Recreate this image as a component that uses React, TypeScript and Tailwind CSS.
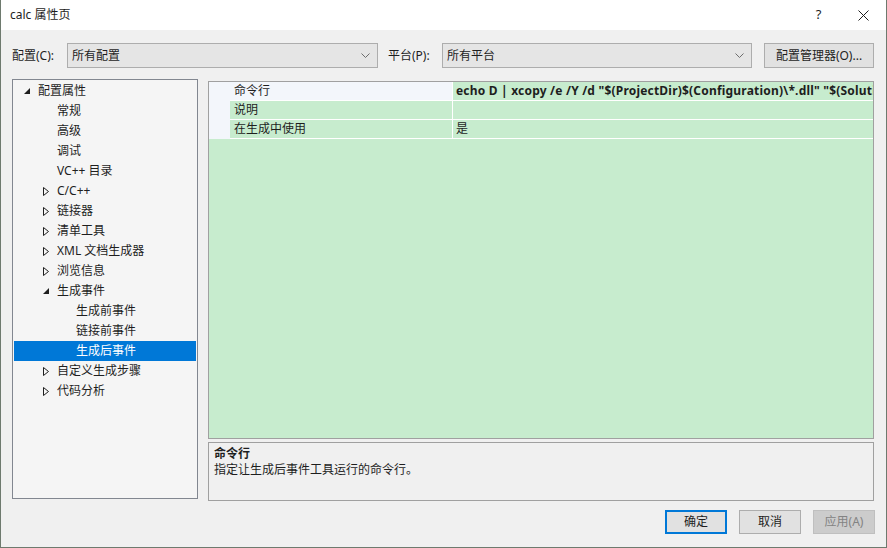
import React from "react";

type Node = { label: string; level: number; toggle?: "open" | "closed"; selected?: boolean };

const tree: Node[] = [
  { label: "配置属性", level: 0, toggle: "open" },
  { label: "常规", level: 1 },
  { label: "高级", level: 1 },
  { label: "调试", level: 1 },
  { label: "VC++ 目录", level: 1 },
  { label: "C/C++", level: 1, toggle: "closed" },
  { label: "链接器", level: 1, toggle: "closed" },
  { label: "清单工具", level: 1, toggle: "closed" },
  { label: "XML 文档生成器", level: 1, toggle: "closed" },
  { label: "浏览信息", level: 1, toggle: "closed" },
  { label: "生成事件", level: 1, toggle: "open" },
  { label: "生成前事件", level: 2 },
  { label: "链接前事件", level: 2 },
  { label: "生成后事件", level: 2, selected: true },
  { label: "自定义生成步骤", level: 1, toggle: "closed" },
  { label: "代码分析", level: 1, toggle: "closed" },
];

const padByLevel = ["pl-[10px]", "pl-[29px]", "pl-[48px]"];

function Toggle({ kind }: { kind?: "open" | "closed" }) {
  if (kind === "open")
    return (
      <svg width="6" height="6" viewBox="0 0 6 6" className="mr-[8px] shrink-0">
        <polygon points="6,0 6,6 0,6" fill="#1e1e1e" />
      </svg>
    );
  if (kind === "closed")
    return (
      <svg width="6" height="9" viewBox="0 0 6 9" className="mr-[8px] shrink-0">
        <polygon points="0.5,0.5 5.5,4.5 0.5,8.5" fill="none" stroke="#1e1e1e" strokeWidth="1" />
      </svg>
    );
  return <span className="w-[14px] shrink-0" />;
}

function Chevron() {
  return (
    <svg width="9" height="5" viewBox="0 0 9 5" className="shrink-0">
      <polyline points="0.5,0.5 4.5,4.5 8.5,0.5" fill="none" stroke="#6d6d6d" strokeWidth="1" />
    </svg>
  );
}

function Combo({ value, width }: { value: string; width: string }) {
  return (
    <div className={`${width} shrink-0 h-[25px] flex items-center justify-between pl-[4px] pr-[7px] bg-[#e5e5e5] border border-[#adadad]`}>
      <span>{value}</span>
      <Chevron />
    </div>
  );
}

export default function App() {
  return (
    <div className="w-[887px] h-[548px] flex flex-col border-x border-b border-[#6e7a6e] text-[12px] text-[#1e1e1e] font-['Noto_Sans','Noto_Sans_CJK_SC',sans-serif] overflow-hidden">
      {/* 标题栏 */}
      <div className="h-[30px] shrink-0 bg-white flex items-center pl-[9px]">
        <span className="flex-1">calc 属性页</span>
        <span className="w-[46px] text-center text-[13px] pl-[3px]">?</span>
        <span className="w-[46px] flex justify-center">
          <svg width="11" height="11" viewBox="0 0 11 11">
            <path d="M0.5 0.5 L10.5 10.5 M10.5 0.5 L0.5 10.5" stroke="#1e1e1e" strokeWidth="1" />
          </svg>
        </span>
      </div>

      <div className="flex-1 bg-[#f0f0f0] flex flex-col pl-[11px] pr-[11px]">
        {/* 配置 / 平台 */}
        <div className="flex items-center mt-[13px] h-[25px]">
          <span className="w-[55px] shrink-0">配置(C):</span>
          <Combo value="所有配置" width="w-[311px]" />
          <span className="w-[54px] shrink-0 ml-[10px]">平台(P):</span>
          <Combo value="所有平台" width="w-[310px]" />
          <div className="ml-[12px] w-[110px] shrink-0 h-[25px] flex items-center justify-center bg-[#e1e1e1] border border-[#adadad]">
            配置管理器(O)...
          </div>
        </div>

        <div className="flex mt-[11px] h-[422px]">
          {/* 树 */}
          <div className="w-[186px] shrink-0 h-[420px] bg-[#f5f5f5] border border-[#828790] pt-px">
            {tree.map((n) => (
              <div
                key={n.label}
                className={`h-[20px] mx-px flex items-center whitespace-nowrap ${padByLevel[n.level]} ${
                  n.selected ? "bg-[#0078d7] text-white" : ""
                }`}
              >
                <Toggle kind={n.toggle} />
                <span className="leading-none">{n.label}</span>
              </div>
            ))}
          </div>

          {/* 右侧 */}
          <div className="w-[666px] shrink-0 ml-[10px] pt-[2px] flex flex-col">
            <div className="h-[358px] border border-[#a0a0a0] bg-[#c7ecce] flex flex-col">
              <div className="flex">
                <div className="w-[21px] shrink-0 bg-[#f3f6fb] h-[57px]" />
                <div className="flex-1 flex flex-col min-w-0">
                  <div className="flex h-[19px] border-b border-white">
                    <div className="w-[223px] shrink-0 bg-[#f3f6fb] pl-[4px] flex items-center border-r border-white">命令行</div>
                    <div className="flex-1 min-w-0 overflow-hidden whitespace-nowrap pl-[3px] flex items-center font-bold tracking-[0.2px]">
                      echo D | xcopy /e /Y /d "$(ProjectDir)$(Configuration)\*.dll" "$(SolutionDir)$(Configuration)\" /y
                    </div>
                  </div>
                  <div className="flex h-[19px] border-b border-white">
                    <div className="w-[223px] shrink-0 pl-[4px] flex items-center border-r border-white">说明</div>
                    <div className="flex-1" />
                  </div>
                  <div className="flex h-[19px] border-b border-white">
                    <div className="w-[223px] shrink-0 pl-[4px] flex items-center border-r border-white">在生成中使用</div>
                    <div className="flex-1 pl-[3px] flex items-center">是</div>
                  </div>
                </div>
              </div>
            </div>

            <div className="mt-[3px] h-[59px] border border-[#a0a0a0] pl-[5px] pt-[3px] flex flex-col">
              <span className="font-bold leading-[16px]">命令行</span>
              <span className="leading-[16px]">指定让生成后事件工具运行的命令行。</span>
            </div>
          </div>
        </div>

        {/* 按钮 */}
        <div className="flex justify-end gap-[12px] mt-[9px]">
          <div className="w-[62px] h-[24px] flex items-center justify-center bg-[#e1e1e1] border-2 border-[#0078d7]">确定</div>
          <div className="w-[62px] h-[24px] flex items-center justify-center bg-[#e1e1e1] border border-[#adadad]">取消</div>
          <div className="w-[62px] h-[24px] flex items-center justify-center bg-[#cccccc] border border-[#bfbfbf] text-[#838383]">应用(A)</div>
        </div>
      </div>
    </div>
  );
}
